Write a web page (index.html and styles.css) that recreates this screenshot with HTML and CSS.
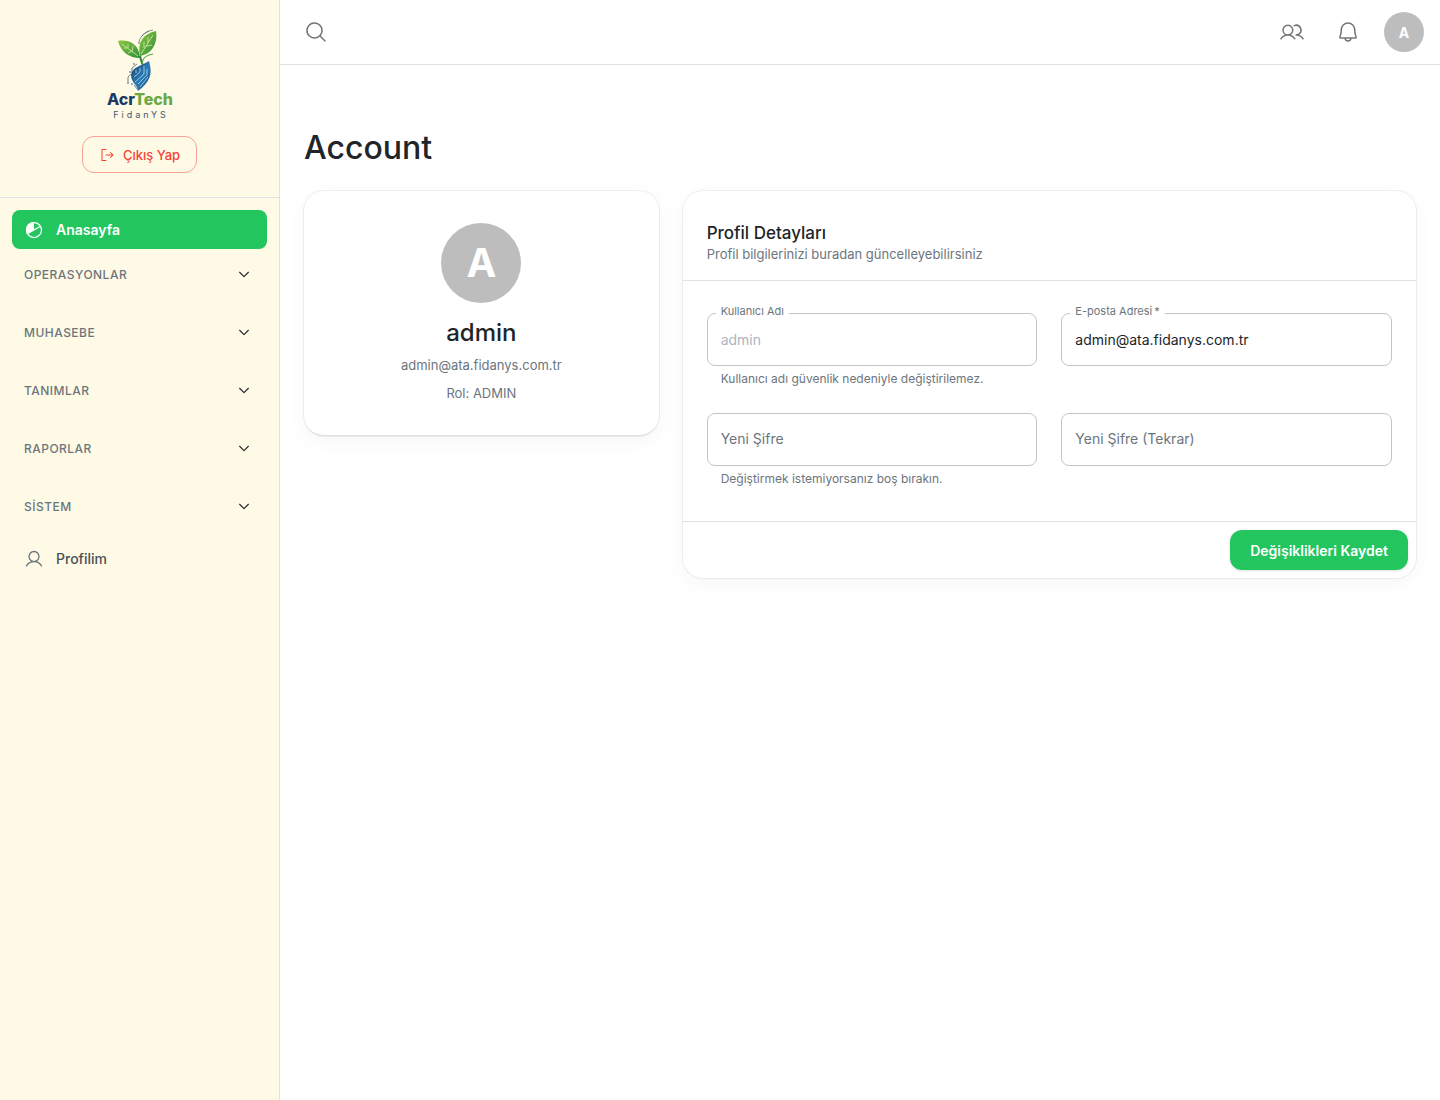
FILE: index.html
```
<!DOCTYPE html>
<html lang="tr">
<head>
    <meta charset="UTF-8">
    <meta name="viewport" content="width=device-width, initial-scale=1.0">
    <title>Account | FidanYS</title>
    <link rel="stylesheet" href="styles.css">
</head>
<body>
    <div class="layout">
        <aside class="sidebar">
            <div class="sidebar-top">
                <a class="logo" href="#" aria-label="AcrTech FidanYS">
                    <svg width="80" height="92" viewBox="0 0 80 92">
                        <defs>
                            <linearGradient id="leaf" x1="0" y1="0" x2="1" y2="1">
                                <stop offset="0" stop-color="#8cc63f"/>
                                <stop offset="1" stop-color="#2f8f3a"/>
                            </linearGradient>
                            <linearGradient id="seed" x1="0" y1="0" x2="1" y2="1">
                                <stop offset="0" stop-color="#1b3f66"/>
                                <stop offset="0.55" stop-color="#2a7dbb"/>
                                <stop offset="1" stop-color="#163f78"/>
                            </linearGradient>
                        </defs>
                        <!-- yapraklar -->
                        <path fill="url(#leaf)" d="M18 13C29 11 39 16 40 30C29 30 21 24 18 13Z"/>
                        <path fill="url(#leaf)" d="M40 28C37 14 43 6 56 3C58 15 52 26 40 28Z"/>
                        <path fill="none" stroke="#d9efb0" stroke-width="0.8" d="M22 16L38 28M28 20V16M32 23L33 18M27 20L24 20M32 23L28 25M41 26L53 7M44 20V14M48 15V9M46 18L52 17"/>
                        <path fill="none" stroke="#387f3d" stroke-width="2" d="M40 28C41 31 41 34 43 37"/>
                        <path fill="none" stroke="#5aa54a" stroke-width="1.2" d="M53 26C46 27 42 31 42 36"/>
                        <path fill="none" stroke="#41606a" stroke-width="0.7" d="M39 14C40 8 46 3 53 2M42 8C44 5 47 4 49 3"/>
                        <circle cx="39" cy="15" r="0.8" fill="#41606a"/>
                        <!-- tohum -->
                        <path fill="url(#seed)" d="M49 33C53 46 50 54 38 63C38 57 31 55 31 47C32 39 41 38 49 33Z"/>
                        <path fill="none" stroke="#b5d9ea" stroke-width="0.8" d="M44 38V46L35 54M47 41V47L38 56M40 40V44L34 49M48 49L40 59M36 42V45"/>
                        <path fill="none" stroke="#294d67" stroke-width="0.7" d="M37 36L32 40V45M31 46L28 49V54M34 57L38 62"/>
                        <circle cx="30" cy="44" r="0.8" fill="#294d67"/>
                        <circle cx="28" cy="55" r="0.8" fill="#294d67"/>
                        <circle cx="34" cy="36" r="0.8" fill="#294d67"/>
                        <circle cx="32" cy="56" r="0.8" fill="#294d67"/>
                        <text class="logo-name" x="40" y="77" text-anchor="middle" fill="#1d3a66">Acr<tspan fill="#69a843">Tech</tspan></text>
                        <text class="logo-sub" x="41" y="90" text-anchor="middle" fill="#44586c">FidanYS</text>
                    </svg>
                </a>
                <button class="logout" type="button">
                    <svg class="icon" width="16" height="16" viewBox="0 0 256 256"><path d="M120,216a8,8,0,0,1-8,8H48a8,8,0,0,1-8-8V40a8,8,0,0,1,8-8h64a8,8,0,0,1,0,16H56V208h56A8,8,0,0,1,120,216Zm109.66-93.66-40-40a8,8,0,0,0-11.32,11.32L204.69,120H112a8,8,0,0,0,0,16h92.69l-26.35,26.34a8,8,0,0,0,11.32,11.32l40-40A8,8,0,0,0,229.66,122.34Z"/></svg>
                    Çıkış Yap
                </button>
            </div>

            <nav class="nav">
                <a class="nav-item active" href="#">
                    <svg width="20" height="20" viewBox="0 0 256 256">
                        <circle cx="128" cy="128" r="96" fill="none" stroke="currentColor" stroke-width="16"/>
                        <path fill="currentColor" d="M128 24V128L38 180A104 104 0 0 1 128 24Z"/>
                        <path stroke="currentColor" stroke-width="16" d="M38 180L211 80"/>
                    </svg>
                    Anasayfa
                </a>
                <button class="nav-group" type="button">OPERASYONLAR <svg class="caret" width="14" height="14" viewBox="0 0 256 256"><path d="M208 96L128 176L48 96"/></svg></button>
                <button class="nav-group" type="button">MUHASEBE <svg class="caret" width="14" height="14" viewBox="0 0 256 256"><path d="M208 96L128 176L48 96"/></svg></button>
                <button class="nav-group" type="button">TANIMLAR <svg class="caret" width="14" height="14" viewBox="0 0 256 256"><path d="M208 96L128 176L48 96"/></svg></button>
                <button class="nav-group" type="button">RAPORLAR <svg class="caret" width="14" height="14" viewBox="0 0 256 256"><path d="M208 96L128 176L48 96"/></svg></button>
                <button class="nav-group" type="button">SİSTEM <svg class="caret" width="14" height="14" viewBox="0 0 256 256"><path d="M208 96L128 176L48 96"/></svg></button>
                <a class="nav-item" href="#">
                    <svg class="icon" width="20" height="20" viewBox="0 0 256 256"><path d="M230.92,212c-15.23-26.33-38.7-45.21-66.09-54.16a72,72,0,1,0-73.66,0C63.78,166.78,40.31,185.66,25.08,212a8,8,0,1,0,13.85,8c18.84-32.56,52.14-52,89.07-52s70.23,19.44,89.07,52a8,8,0,1,0,13.85-8ZM72,96a56,56,0,1,1,56,56A56.06,56.06,0,0,1,72,96Z"/></svg>
                    Profilim
                </a>
            </nav>
        </aside>

        <div class="page">
            <header class="topbar">
                <button class="icon-btn" type="button" aria-label="Ara">
                    <svg class="icon" width="24" height="24" viewBox="0 0 256 256"><path d="M229.66,218.34l-50.07-50.06a88.11,88.11,0,1,0-11.31,11.31l50.06,50.07a8,8,0,0,0,11.32-11.32ZM40,112a72,72,0,1,1,72,72A72.08,72.08,0,0,1,40,112Z"/></svg>
                </button>
                <div class="topbar-right">
                    <button class="icon-btn" type="button" aria-label="Kişiler">
                        <svg class="icon" width="24" height="24" viewBox="0 0 256 256"><path d="M117.25,157.92a60,60,0,1,0-66.5,0A95.83,95.83,0,0,0,3.53,195.63a8,8,0,1,0,13.4,8.74,80,80,0,0,1,134.14,0,8,8,0,0,0,13.4-8.74A95.83,95.83,0,0,0,117.25,157.92ZM40,108a44,44,0,1,1,44,44A44.05,44.05,0,0,1,40,108Zm210.14,98.7a8,8,0,0,1-11.07-2.33A79.83,79.83,0,0,0,172,168a8,8,0,0,1,0-16,44,44,0,1,0-16.34-84.87,8,8,0,1,1-5.94-14.85,60,60,0,0,1,55.53,105.64,95.83,95.83,0,0,1,47.22,37.71A8,8,0,0,1,250.14,206.7Z"/></svg>
                    </button>
                    <button class="icon-btn" type="button" aria-label="Bildirimler">
                        <svg class="icon" width="24" height="24" viewBox="0 0 256 256"><path d="M221.8,175.94C216.25,166.38,208,139.33,208,104a80,80,0,1,0-160,0c0,35.34-8.26,62.38-13.81,71.94A16,16,0,0,0,48,200H88.81a40,40,0,0,0,78.38,0H208a16,16,0,0,0,13.8-24.06ZM128,216a24,24,0,0,1-22.62-16h45.24A24,24,0,0,1,128,216ZM48,184c7.7-13.24,16-43.92,16-80a64,64,0,1,1,128,0c0,36.05,8.28,66.73,16,80Z"/></svg>
                    </button>
                    <button class="avatar" type="button">A</button>
                </div>
            </header>

            <main class="content">
                <h1>Account</h1>
                <div class="cards">
                    <section class="card user-card">
                        <div class="user-info">
                            <div class="avatar avatar-lg">A</div>
                            <h2 class="user-name">admin</h2>
                            <p>admin@ata.fidanys.com.tr</p>
                            <p>Rol: ADMIN</p>
                        </div>
                    </section>

                    <form class="card form-card">
                        <div class="card-header">
                            <h2 class="card-title">Profil Detayları</h2>
                            <p>Profil bilgilerinizi buradan güncelleyebilirsiniz</p>
                        </div>
                        <div class="fields">
                            <div class="field shrink">
                                <input id="username" type="text" value="admin" disabled>
                                <label for="username">Kullanıcı Adı</label>
                                <p class="helper">Kullanıcı adı güvenlik nedeniyle değiştirilemez.</p>
                            </div>
                            <div class="field shrink">
                                <input id="email" type="email" value="admin@ata.fidanys.com.tr" required>
                                <label for="email">E-posta Adresi&thinsp;*</label>
                            </div>
                            <div class="field">
                                <input id="password" type="password">
                                <label for="password">Yeni Şifre</label>
                                <p class="helper">Değiştirmek istemiyorsanız boş bırakın.</p>
                            </div>
                            <div class="field">
                                <input id="password2" type="password">
                                <label for="password2">Yeni Şifre (Tekrar)</label>
                            </div>
                        </div>
                        <div class="card-actions">
                            <button class="save" type="submit">Değişiklikleri Kaydet</button>
                        </div>
                    </form>
                </div>
            </main>
        </div>
    </div>
</body>
</html>
```
FILE: styles.css
```
* {
    box-sizing: border-box;
}

body {
    margin: 0;
    font-family: Inter, "Noto Sans", sans-serif;
    font-size: 14px;
    line-height: 20px;
    color: #212529;
    background-color: #fff;
}

h1, h2, p {
    margin: 0;
}

button, input {
    font-family: inherit;
}

button {
    cursor: pointer;
}

svg {
    display: block;
    flex-shrink: 0;
}

.icon {
    fill: currentColor;
}

.layout {
    display: flex;
    min-height: 100vh;
}

/* Sidebar */
.sidebar {
    width: 280px;
    flex-shrink: 0;
    background-color: #fefae5;
    border-right: 1px solid #dee2e6;
}

.sidebar-top {
    display: flex;
    flex-direction: column;
    align-items: center;
    gap: 16px;
    padding: 28px 24px 24px;
    border-bottom: 1px solid #dee2e6;
}

.logo-name {
    font-family: Inter, sans-serif;
    font-size: 16px;
    font-weight: 800;
}

.logo-sub {
    font-family: Inter, sans-serif;
    font-size: 9px;
    letter-spacing: 3px;
}

.logout {
    display: flex;
    align-items: center;
    gap: 8px;
    height: 37px;
    padding: 0 16px;
    font-size: 13px;
    font-weight: 500;
    color: #f44336;
    background: none;
    border: 1px solid #f9a19a;
    border-radius: 12px;
}

.nav {
    padding: 12px;
}

.nav-item {
    display: flex;
    align-items: center;
    gap: 12px;
    height: 39px;
    padding: 0 12px;
    font-weight: 500;
    color: #495057;
    text-decoration: none;
    border-radius: 8px;
}

.nav-item .icon {
    fill: #6c757d;
}

.nav-item.active {
    font-weight: 600;
    color: #fff;
    background-color: #22c55e;
}

.nav-group {
    display: flex;
    align-items: center;
    justify-content: space-between;
    width: 100%;
    height: 50px;
    margin-bottom: 8px;
    padding: 0 16px 0 12px;
    font-size: 12px;
    font-weight: 500;
    letter-spacing: 0.04em;
    color: #6c757d;
    background: none;
    border: none;
}

.caret {
    fill: none;
    stroke: #212529;
    stroke-width: 20;
    stroke-linecap: round;
    stroke-linejoin: round;
}

/* Topbar */
.page {
    flex: 1;
    min-width: 0;
}

.topbar {
    display: flex;
    align-items: center;
    justify-content: space-between;
    height: 65px;
    padding: 0 16px;
    border-bottom: 1px solid #dee2e6;
}

.topbar-right {
    display: flex;
    align-items: center;
    gap: 16px;
}

.icon-btn {
    padding: 8px;
    color: #757575;
    background: none;
    border: none;
}

.avatar {
    display: flex;
    align-items: center;
    justify-content: center;
    width: 40px;
    height: 40px;
    font-size: 14px;
    font-weight: 700;
    color: #fff;
    background-color: #bdbdbd;
    border: none;
    border-radius: 50%;
}

.avatar-lg {
    width: 80px;
    height: 80px;
    font-size: 40px;
}

/* Content */
.content {
    padding: 64px 24px;
}

h1 {
    margin-bottom: 24px;
    font-size: 32px;
    font-weight: 500;
    line-height: 38px;
}

.cards {
    display: grid;
    grid-template-columns: repeat(3, 1fr);
    align-items: start;
    gap: 24px;
}

.card {
    overflow: hidden;
    background-color: #fff;
    border-radius: 20px;
    box-shadow: 0 0 0 1px rgba(0,0,0,0.06), 0 5px 22px rgba(0,0,0,0.04);
}

.card p {
    font-size: 13px;
    color: #6c757d;
}

.user-card {
    border-bottom: 1px solid #dee2e6;
}

.user-info {
    display: flex;
    flex-direction: column;
    align-items: center;
    gap: 8px;
    padding: 32px 24px;
}

.user-name {
    margin-top: 8px;
    font-size: 24px;
    font-weight: 500;
    line-height: 28px;
}

.form-card {
    grid-column: span 2;
}

.card-header {
    padding: 32px 24px 16px;
    border-bottom: 1px solid #dee2e6;
}

.card-title {
    font-size: 17px;
    font-weight: 500;
    line-height: 21px;
}

.fields {
    display: grid;
    grid-template-columns: 1fr 1fr;
    gap: 24px;
    padding: 32px 24px;
}

.field {
    position: relative;
}

.field input {
    display: block;
    width: 100%;
    height: 53px;
    padding: 0 13px;
    font-size: 14px;
    color: #212529;
    background-color: #fff;
    border: 1px solid #c4c4c4;
    border-radius: 8px;
    outline: none;
}

.field input:focus {
    border-color: #22c55e;
}

.field input:disabled {
    color: #adb5bd;
}

/* Labels lie over the inputs */
.field label {
    position: absolute;
    top: 16px;
    left: 14px;
    font-size: 14px;
    color: #6c757d;
}

.field.shrink label {
    top: -12px;
    left: 9px;
    padding: 0 5px;
    font-size: 11px;
    background-color: #fff;
}

.field .helper {
    margin: 3px 14px 0;
    font-size: 12px;
}

.card-actions {
    display: flex;
    justify-content: flex-end;
    padding: 8px;
    border-top: 1px solid #dee2e6;
}

.save {
    height: 40px;
    padding: 0 20px;
    font-size: 14px;
    font-weight: 600;
    color: #fff;
    background-color: #22c55e;
    border: none;
    border-radius: 12px;
    box-shadow: 0 1px 3px rgba(0,0,0,0.12);
}

.save:hover {
    background-color: #16a34a;
}
```
